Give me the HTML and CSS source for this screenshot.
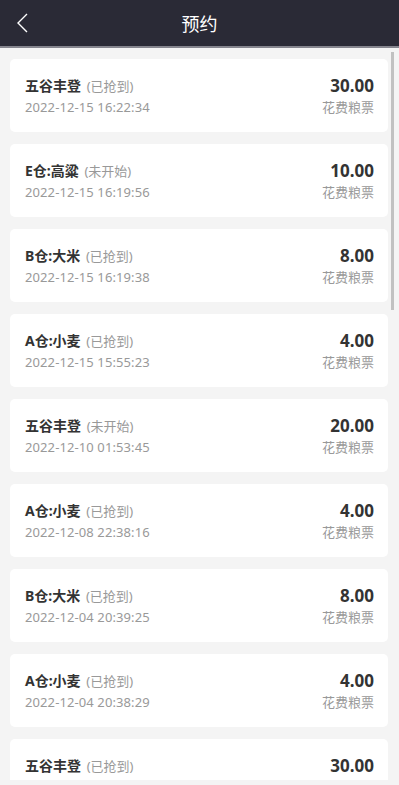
FILE: index.html
```html
<!DOCTYPE html>
<html lang="zh">
<head>
<meta charset="utf-8">
<title>预约</title>
<link rel="stylesheet" href="styles.css">
</head>
<body>
<div class="page">
  <header class="topbar">
    <span class="back">
      <svg width="12" height="20" viewBox="0 0 12 20"><path d="M11 1 L2 10 L11 19" fill="none" stroke="#fff" stroke-width="1.4"/></svg>
    </span>
    <h1 class="title">预约</h1>
  </header>
  <main class="list">
    <div class="scroll-thumb"></div>
    <div class="card"><div class="info"><div class="name">五谷丰登 <span class="status">(已抢到)</span></div><div class="time">2022-12-15 16:22:34</div></div><div class="cost"><div class="amount">30.00</div><div class="label">花费粮票</div></div></div>
    <div class="card"><div class="info"><div class="name">E仓:高粱 <span class="status">(未开始)</span></div><div class="time">2022-12-15 16:19:56</div></div><div class="cost"><div class="amount">10.00</div><div class="label">花费粮票</div></div></div>
    <div class="card"><div class="info"><div class="name">B仓:大米 <span class="status">(已抢到)</span></div><div class="time">2022-12-15 16:19:38</div></div><div class="cost"><div class="amount">8.00</div><div class="label">花费粮票</div></div></div>
    <div class="card"><div class="info"><div class="name">A仓:小麦 <span class="status">(已抢到)</span></div><div class="time">2022-12-15 15:55:23</div></div><div class="cost"><div class="amount">4.00</div><div class="label">花费粮票</div></div></div>
    <div class="card"><div class="info"><div class="name">五谷丰登 <span class="status">(未开始)</span></div><div class="time">2022-12-10 01:53:45</div></div><div class="cost"><div class="amount">20.00</div><div class="label">花费粮票</div></div></div>
    <div class="card"><div class="info"><div class="name">A仓:小麦 <span class="status">(已抢到)</span></div><div class="time">2022-12-08 22:38:16</div></div><div class="cost"><div class="amount">4.00</div><div class="label">花费粮票</div></div></div>
    <div class="card"><div class="info"><div class="name">B仓:大米 <span class="status">(已抢到)</span></div><div class="time">2022-12-04 20:39:25</div></div><div class="cost"><div class="amount">8.00</div><div class="label">花费粮票</div></div></div>
    <div class="card"><div class="info"><div class="name">A仓:小麦 <span class="status">(已抢到)</span></div><div class="time">2022-12-04 20:38:29</div></div><div class="cost"><div class="amount">4.00</div><div class="label">花费粮票</div></div></div>
    <div class="card"><div class="info"><div class="name">五谷丰登 <span class="status">(已抢到)</span></div><div class="time">2022-12-04 20:31:02</div></div><div class="cost"><div class="amount">30.00</div><div class="label">花费粮票</div></div></div>
  </main>
</div>
</body>
</html>
```
FILE: styles.css
```css
* { box-sizing: border-box; }
html, body { margin: 0; padding: 0; }
body {
  background: #f4f4f4;
  font-family: "Noto Sans", "Noto Sans CJK SC", sans-serif;
  width: 399px;
  height: 785px;
  overflow: hidden;
}
.page {
  display: flex;
  flex-direction: column;
  height: 785px;
}
.topbar {
  position: relative;
  height: 48px;
  flex: none;
  background: #2a2a36;
  border-bottom: 2px solid #85858e;
  display: flex;
  align-items: center;
  justify-content: center;
}
.back {
  position: absolute;
  left: 16px;
  top: 13px;
  width: 12px;
  height: 20px;
  display: block;
}
.back svg { display: block; }
.title {
  margin: 0;
  color: #fff;
  font-size: 18px;
  font-weight: 400;
  line-height: 24px;
  font-family: "Noto Sans CJK SC", sans-serif;
}
.list {
  position: relative;
  height: 732px;
  flex: none;
  overflow: hidden;
  padding: 11px 11px 0 10px;
  display: flex;
  flex-direction: column;
  gap: 12px;
}
.scroll-thumb {
  position: absolute;
  right: 5px;
  top: 4px;
  width: 3px;
  height: 258px;
  background: #c1c1c1;
}
.card {
  flex: none;
  height: 73px;
  background: #fff;
  border-radius: 5px;
  padding: 16px 14px 0 15px;
  display: flex;
  justify-content: space-between;
}
.name {
  font-size: 14px;
  line-height: 21px;
  font-weight: 700;
  color: #333;
}
.status {
  font-size: 13px;
  font-weight: 400;
  color: #999;
  margin-left: 2px;
}
.time {
  font-size: 13px;
  line-height: 21px;
  color: #999;
  letter-spacing: 0.1px;
}
.cost { text-align: right; }
.amount {
  font-size: 17px;
  line-height: 22px;
  font-weight: 700;
  color: #333;
}
.label {
  font-size: 13px;
  line-height: 20px;
  color: #999;
}
```
